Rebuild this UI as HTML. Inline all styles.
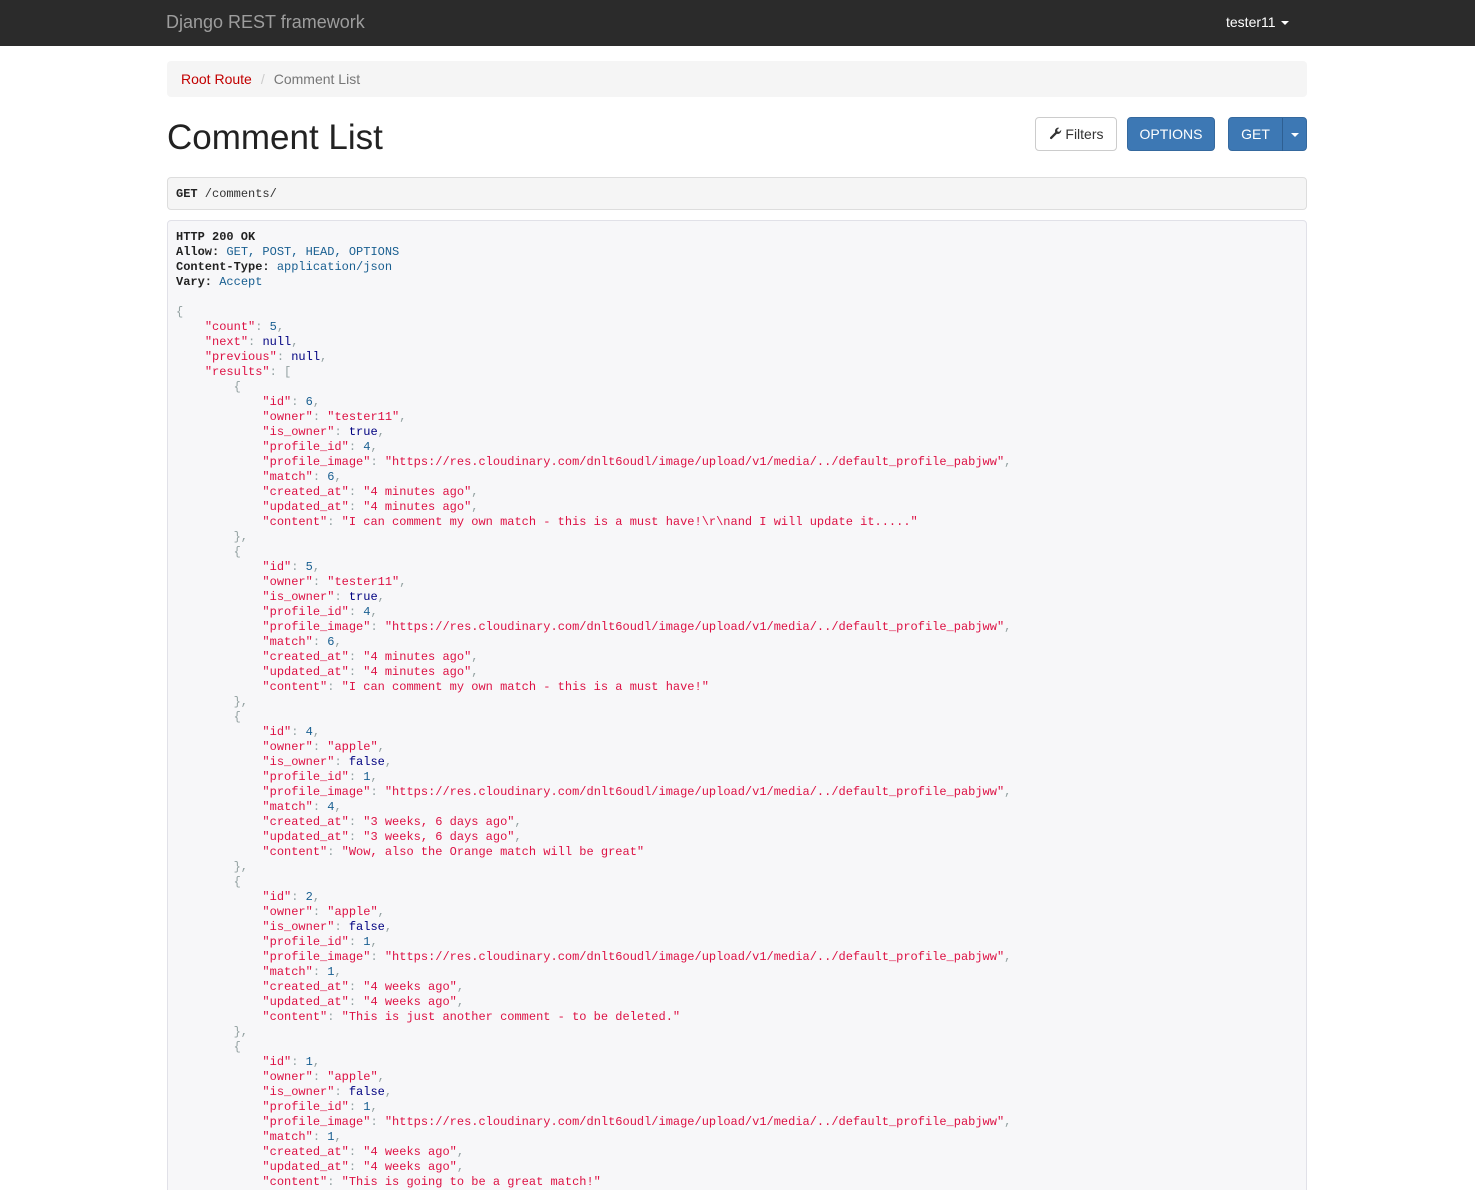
<!DOCTYPE html>
<html><head><meta charset="utf-8"><style>
html,body{height:1190px;overflow:hidden;}
body{margin:0;background:#fff;font-family:"Liberation Sans",Helvetica,Arial,sans-serif;font-size:14px;color:#333;}
.nav{height:46px;background:#2b2b2b;position:relative;}
.brand{position:absolute;left:166px;top:12px;font-size:18px;color:#9d9d9d;}
.user{position:absolute;left:1226px;top:14px;font-size:14px;color:#fff;}
.caret{display:inline-block;width:0;height:0;border-top:4px solid #fff;border-left:4px solid transparent;border-right:4px solid transparent;vertical-align:middle;margin-left:5px;}
.wrap{position:relative;width:1140px;margin-left:167px;}
.bc{position:absolute;top:15px;left:0;width:1140px;height:36px;background:#f5f5f5;border-radius:4px;line-height:37px;padding-left:14px;box-sizing:border-box;}
.bc a{color:#c20000;}
.bc .sep{color:#ccc;padding:0 9px;}
.bc .act{color:#777;}
h1{position:absolute;top:72px;left:0;margin:0;font-size:35px;font-weight:400;color:#222;}
.btn{position:absolute;top:71px;height:34px;box-sizing:border-box;border-radius:4px;line-height:33px;font-size:14px;text-align:center;}
.filters{left:868px;width:82px;border:1px solid #ccc;background:#fff;color:#333;}
.opt{left:960px;width:88px;background:#3d78b4;border:1px solid #35699e;color:#fff;}
.get{left:1061px;width:79px;background:#3d78b4;border:1px solid #35699e;color:#fff;text-align:left;}
.get span.g{display:inline-block;width:53px;text-align:center;border-right:1px solid #2e5f92;}
.req{position:absolute;top:131px;left:0;width:1140px;height:33px;box-sizing:border-box;background:#f5f5f5;border:1px solid #ddd;border-radius:4px;font-family:"Liberation Mono",monospace;font-size:12px;line-height:32px;padding-left:8px;color:#333;}
pre{position:absolute;top:174px;left:0;width:1140px;height:1000px;box-sizing:border-box;margin:0;background:#f7f7f9;border:1px solid #e1e1e8;border-radius:4px;font-family:"Liberation Mono",monospace;font-size:12px;line-height:15px;padding:9px 8px;color:#333;overflow:hidden;}
b{font-weight:bold;color:#222}
.s{color:#dd1144}.n{color:#195f91}.l{color:#000080}.p{color:#93a1a1}.h{color:#195f91}
</style></head><body>
<div class="nav"><div class="brand">Django REST framework</div><div class="user">tester11<span class="caret"></span></div></div>
<div class="wrap">
<div class="bc"><a>Root Route</a><span class="sep">/</span><span class="act">Comment List</span></div>
<h1>Comment List</h1>
<div class="btn filters"><svg width="13" height="13" viewBox="0 0 16 16" style="vertical-align:-1px"><path d="M15 4.5a4 4 0 0 1-5.3 3.8L3.3 14.7a1.5 1.5 0 0 1-2-2L7.7 6.3A4 4 0 0 1 12.5 1L10 3.5l.5 2 2 .5L15 3.5z" fill="#333"/></svg> Filters</div>
<div class="btn opt">OPTIONS</div>
<div class="btn get"><span class="g">GET</span><span class="caret" style="margin-left:8px"></span></div>
<div class="req"><b>GET</b> /comments/</div>
<pre><b>HTTP 200 OK</b>
<b>Allow:</b> <span class="h">GET, POST, HEAD, OPTIONS</span>
<b>Content-Type:</b> <span class="h">application/json</span>
<b>Vary:</b> <span class="h">Accept</span>

<span class="p">{</span>
    <span class="s">"count"</span><span class="p">: </span><span class="n">5</span><span class="p">,</span>
    <span class="s">"next"</span><span class="p">: </span><span class="l">null</span><span class="p">,</span>
    <span class="s">"previous"</span><span class="p">: </span><span class="l">null</span><span class="p">,</span>
    <span class="s">"results"</span><span class="p">: [</span>
        <span class="p">{</span>
            <span class="s">"id"</span><span class="p">: </span><span class="n">6</span><span class="p">,</span>
            <span class="s">"owner"</span><span class="p">: </span><span class="s">"tester11"</span><span class="p">,</span>
            <span class="s">"is_owner"</span><span class="p">: </span><span class="l">true</span><span class="p">,</span>
            <span class="s">"profile_id"</span><span class="p">: </span><span class="n">4</span><span class="p">,</span>
            <span class="s">"profile_image"</span><span class="p">: </span><span class="s">"https://res.cloudinary.com/dnlt6oudl/image/upload/v1/media/../default_profile_pabjww"</span><span class="p">,</span>
            <span class="s">"match"</span><span class="p">: </span><span class="n">6</span><span class="p">,</span>
            <span class="s">"created_at"</span><span class="p">: </span><span class="s">"4 minutes ago"</span><span class="p">,</span>
            <span class="s">"updated_at"</span><span class="p">: </span><span class="s">"4 minutes ago"</span><span class="p">,</span>
            <span class="s">"content"</span><span class="p">: </span><span class="s">"I can comment my own match - this is a must have!\r\nand I will update it....."</span>
        <span class="p">},</span>
        <span class="p">{</span>
            <span class="s">"id"</span><span class="p">: </span><span class="n">5</span><span class="p">,</span>
            <span class="s">"owner"</span><span class="p">: </span><span class="s">"tester11"</span><span class="p">,</span>
            <span class="s">"is_owner"</span><span class="p">: </span><span class="l">true</span><span class="p">,</span>
            <span class="s">"profile_id"</span><span class="p">: </span><span class="n">4</span><span class="p">,</span>
            <span class="s">"profile_image"</span><span class="p">: </span><span class="s">"https://res.cloudinary.com/dnlt6oudl/image/upload/v1/media/../default_profile_pabjww"</span><span class="p">,</span>
            <span class="s">"match"</span><span class="p">: </span><span class="n">6</span><span class="p">,</span>
            <span class="s">"created_at"</span><span class="p">: </span><span class="s">"4 minutes ago"</span><span class="p">,</span>
            <span class="s">"updated_at"</span><span class="p">: </span><span class="s">"4 minutes ago"</span><span class="p">,</span>
            <span class="s">"content"</span><span class="p">: </span><span class="s">"I can comment my own match - this is a must have!"</span>
        <span class="p">},</span>
        <span class="p">{</span>
            <span class="s">"id"</span><span class="p">: </span><span class="n">4</span><span class="p">,</span>
            <span class="s">"owner"</span><span class="p">: </span><span class="s">"apple"</span><span class="p">,</span>
            <span class="s">"is_owner"</span><span class="p">: </span><span class="l">false</span><span class="p">,</span>
            <span class="s">"profile_id"</span><span class="p">: </span><span class="n">1</span><span class="p">,</span>
            <span class="s">"profile_image"</span><span class="p">: </span><span class="s">"https://res.cloudinary.com/dnlt6oudl/image/upload/v1/media/../default_profile_pabjww"</span><span class="p">,</span>
            <span class="s">"match"</span><span class="p">: </span><span class="n">4</span><span class="p">,</span>
            <span class="s">"created_at"</span><span class="p">: </span><span class="s">"3 weeks, 6 days ago"</span><span class="p">,</span>
            <span class="s">"updated_at"</span><span class="p">: </span><span class="s">"3 weeks, 6 days ago"</span><span class="p">,</span>
            <span class="s">"content"</span><span class="p">: </span><span class="s">"Wow, also the Orange match will be great"</span>
        <span class="p">},</span>
        <span class="p">{</span>
            <span class="s">"id"</span><span class="p">: </span><span class="n">2</span><span class="p">,</span>
            <span class="s">"owner"</span><span class="p">: </span><span class="s">"apple"</span><span class="p">,</span>
            <span class="s">"is_owner"</span><span class="p">: </span><span class="l">false</span><span class="p">,</span>
            <span class="s">"profile_id"</span><span class="p">: </span><span class="n">1</span><span class="p">,</span>
            <span class="s">"profile_image"</span><span class="p">: </span><span class="s">"https://res.cloudinary.com/dnlt6oudl/image/upload/v1/media/../default_profile_pabjww"</span><span class="p">,</span>
            <span class="s">"match"</span><span class="p">: </span><span class="n">1</span><span class="p">,</span>
            <span class="s">"created_at"</span><span class="p">: </span><span class="s">"4 weeks ago"</span><span class="p">,</span>
            <span class="s">"updated_at"</span><span class="p">: </span><span class="s">"4 weeks ago"</span><span class="p">,</span>
            <span class="s">"content"</span><span class="p">: </span><span class="s">"This is just another comment - to be deleted."</span>
        <span class="p">},</span>
        <span class="p">{</span>
            <span class="s">"id"</span><span class="p">: </span><span class="n">1</span><span class="p">,</span>
            <span class="s">"owner"</span><span class="p">: </span><span class="s">"apple"</span><span class="p">,</span>
            <span class="s">"is_owner"</span><span class="p">: </span><span class="l">false</span><span class="p">,</span>
            <span class="s">"profile_id"</span><span class="p">: </span><span class="n">1</span><span class="p">,</span>
            <span class="s">"profile_image"</span><span class="p">: </span><span class="s">"https://res.cloudinary.com/dnlt6oudl/image/upload/v1/media/../default_profile_pabjww"</span><span class="p">,</span>
            <span class="s">"match"</span><span class="p">: </span><span class="n">1</span><span class="p">,</span>
            <span class="s">"created_at"</span><span class="p">: </span><span class="s">"4 weeks ago"</span><span class="p">,</span>
            <span class="s">"updated_at"</span><span class="p">: </span><span class="s">"4 weeks ago"</span><span class="p">,</span>
            <span class="s">"content"</span><span class="p">: </span><span class="s">"This is going to be a great match!"</span>
        <span class="p">}</span>
    <span class="p">]</span>
<span class="p">}</span></pre>
</div>
</body></html>
